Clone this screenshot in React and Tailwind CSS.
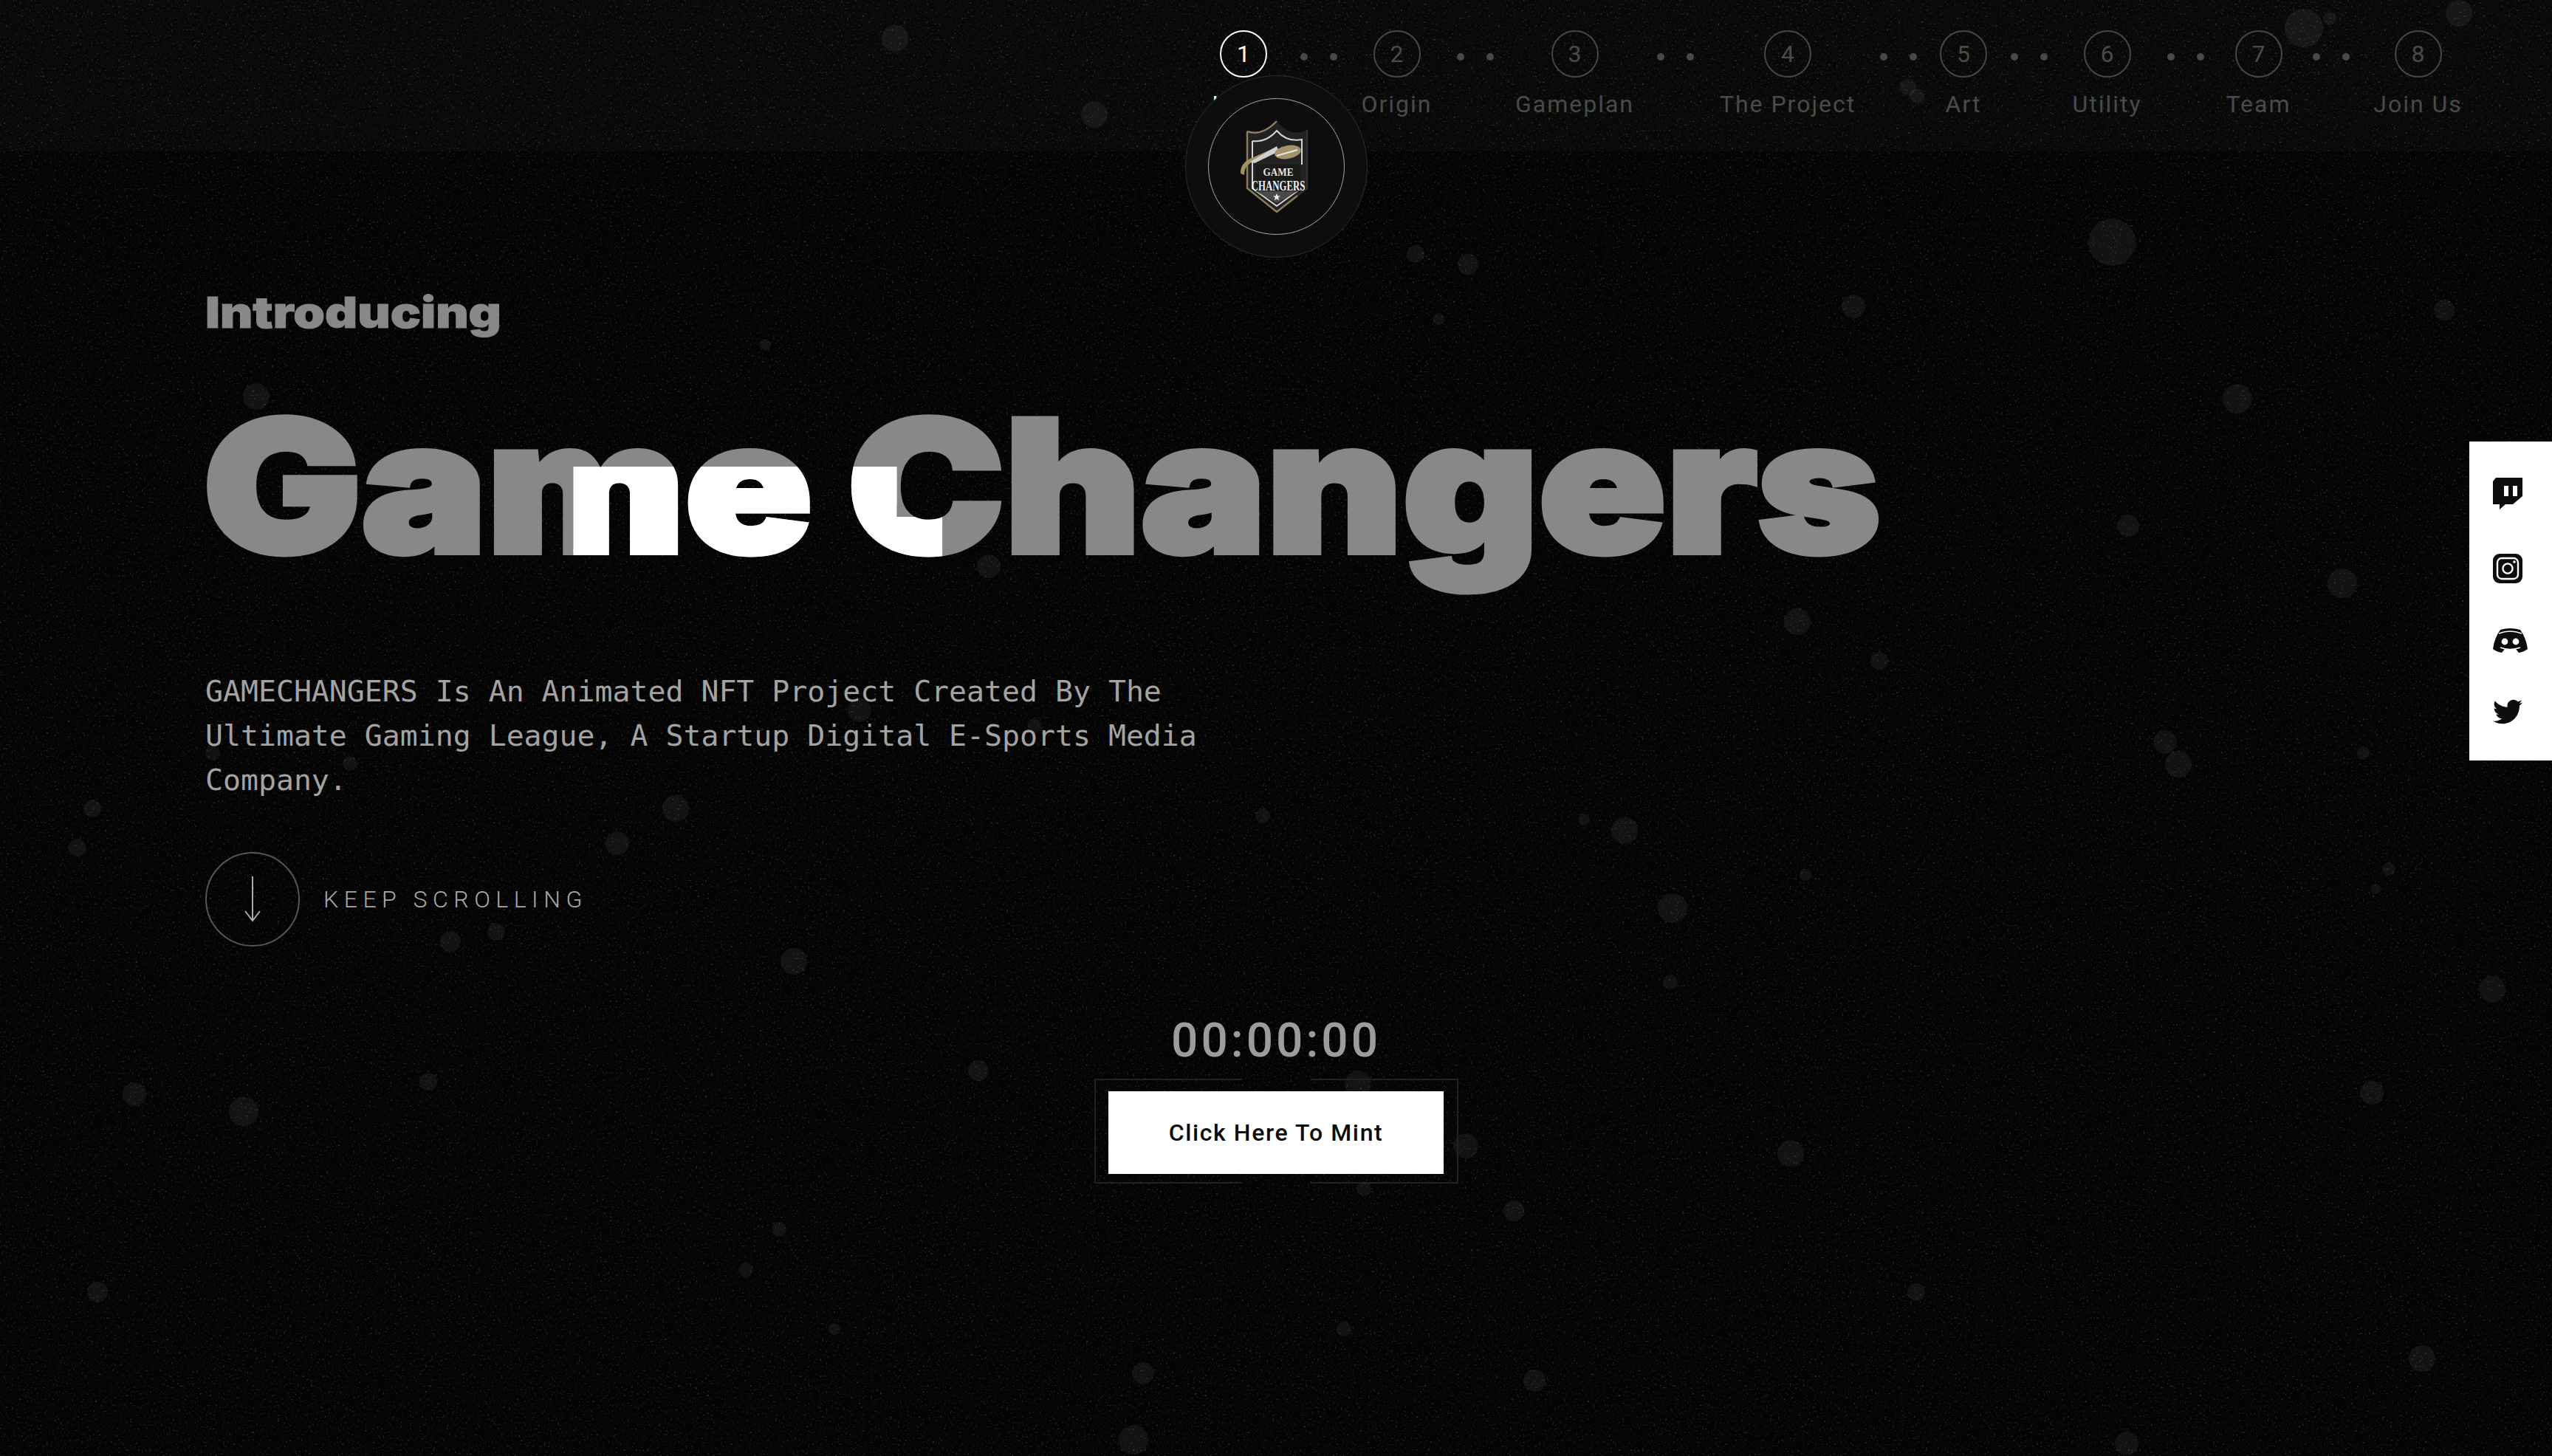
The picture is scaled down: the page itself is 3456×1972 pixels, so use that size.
import { FaTwitter } from "react-icons/fa";

const navItems = [
  { n: 1, label: "Intro", width: "w-[90px]", gap: "w-[113px]", active: true },
  { n: 2, label: "Origin", width: "w-[99px]", gap: "w-[112px]" },
  { n: 3, label: "Gameplan", width: "w-[159px]", gap: "w-[116px]" },
  { n: 4, label: "The Project", width: "w-[186px]", gap: "w-[113px]" },
  { n: 5, label: "Art", width: "w-[64px]", gap: "w-[113px]" },
  { n: 6, label: "Utility", width: "w-[99px]", gap: "w-[114px]" },
  { n: 7, label: "Team", width: "w-[83px]", gap: "w-[114px]" },
  { n: 8, label: "Join Us", width: "w-[121px]" },
];

// [cx, cy, r] of the soft round specks floating over the page
const bokeh = [
  [1212, 52, 18], [1482, 155, 18], [3120, 38, 26], [3330, 18, 18], [3155, 25, 9], [2584, 118, 11], [2596, 130, 10],
  [1917, 344, 12], [1988, 358, 14], [1948, 432, 8], [2860, 328, 32], [3310, 420, 14], [2510, 415, 16],
  [3030, 540, 20], [2882, 712, 15], [3172, 790, 20], [2434, 842, 18], [2545, 895, 12], [2932, 1005, 16],
  [3200, 1020, 9], [2950, 1035, 18], [2200, 1125, 18], [2265, 1230, 20], [3375, 1340, 18], [3212, 1480, 16],
  [2425, 1562, 18], [3280, 1840, 18], [2595, 1750, 12], [2880, 1955, 16], [2078, 1870, 15], [1548, 1860, 15],
  [1535, 1950, 20], [1130, 1800, 8], [132, 1750, 14], [330, 1505, 20], [182, 1482, 16], [580, 1465, 12],
  [125, 1095, 12], [105, 1148, 12], [915, 1095, 18], [836, 1142, 16], [672, 1262, 12], [610, 1275, 14],
  [1075, 1302, 18], [1325, 1450, 14], [1820, 1800, 10], [2050, 1640, 14], [1055, 1665, 10], [1010, 1720, 10],
  [2262, 1330, 10], [1839, 1468, 18], [1847, 1610, 10], [1985, 1552, 17], [2445, 1185, 8], [3235, 1177, 9], [3217, 1204, 7],
  [2145, 1110, 8], [2280, 630, 10], [1710, 1105, 10], [1401, 983, 10], [1164, 962, 16], [288, 1020, 10], [474, 1034, 10],
  [347, 537, 18], [1339, 767, 16], [1036, 467, 8],
];

function Grain() {
  return (
    <svg className="absolute inset-0 h-full w-full" aria-hidden="true">
      <filter id="grain" x="0" y="0" width="100%" height="100%" colorInterpolationFilters="sRGB">
        <feTurbulence type="fractalNoise" baseFrequency="0.38" numOctaves="2" seed="7" />
        <feColorMatrix values="0 0 0 0 1  0 0 0 0 1  0 0 0 0 1  5 0 0 0 -3.1" />
      </filter>
      <rect width="100%" height="100%" filter="url(#grain)" opacity="0.16" />
      {bokeh.map(([cx, cy, r]) => (
        <circle key={`${cx}-${cy}`} cx={cx} cy={cy} r={r} fill="#fff" opacity="0.06" />
      ))}
    </svg>
  );
}

function Dots({ width }) {
  return (
    <div className={`flex shrink-0 items-start gap-[30px] pl-[32px] pt-[31px] ${width}`}>
      <span className="h-[10px] w-[10px] rounded-full bg-[#484848]" />
      <span className="h-[10px] w-[10px] rounded-full bg-[#484848]" />
    </div>
  );
}

function Nav() {
  return (
    <header className="relative flex h-[205px] items-start justify-end bg-white/[0.025] pr-[121px] pt-[41px]">
      {navItems.map((item) => (
        <div key={item.n} className="flex shrink-0">
          <div className={`flex flex-col items-center ${item.width}`}>
            <div
              className={`flex h-[64px] w-[64px] items-center justify-center rounded-full border-2 text-[32px] leading-none ${
                item.active ? "border-white text-white" : "border-[#474747] text-[#4a4a4a]"
              }`}
            >
              {item.n}
            </div>
            <span className={`mt-[14px] whitespace-nowrap text-[32px] leading-[44px] ${item.active ? "tracking-[4px] text-white" : "tracking-[2px] text-[#4a4a4a]"}`}>
              {item.label}
            </span>
          </div>
          {item.gap && <Dots width={item.gap} />}
        </div>
      ))}
    </header>
  );
}

function Logo() {
  return (
    <div className="absolute left-[1605px] top-[102px] z-10 flex h-[247px] w-[247px] items-center justify-center rounded-full border border-[#2e2e2e] bg-[#0d0d0d]">
      <div className="flex h-[185px] w-[185px] items-center justify-center rounded-full border border-[#a8a8a8]">
        <svg width="100" height="126" viewBox="0 0 100 126" aria-hidden="true">
          {/* shield */}
          <path d="M10 15 Q30 22 50 1 Q68 24 91 13 L91 92 L50 124 L10 92 Z" fill="#222" />
          <path d="M91 13 L91 92 L50 124" fill="none" stroke="#333" strokeWidth="2.5" />
          <path d="M10 15 Q30 22 50 1 M10 15 L10 92 L50 124 L78 102" fill="none" stroke="#8d7f5a" strokeWidth="2.4" />
          <path d="M17 28 Q36 30 50 14 Q64 30 84 26 L84 60 M17 28 L17 92 L50 116 L83 92" fill="none" stroke="#d5d5d5" strokeWidth="2" />
          <path d="M22 96 H78 L50 112 Z" fill="#4a4a4a" />
          {/* ball with its trail */}
          <path d="M1 72 Q0 58 16 51 L50 36 Q26 52 14 58 Q6 63 6 74 Z" fill="#a1925f" />
          <path d="M14 56 L50 35 L53 42 L20 58 Z" fill="#cfcfcf" />
          <ellipse cx="65" cy="43" rx="18" ry="9" fill="#a3926a" transform="rotate(-10 65 43)" />
          <path d="M50 48 L78 40" stroke="#e8e8e8" strokeWidth="2" />
          <rect x="22" y="60" width="60" height="36" fill="#1a1a1a" />
          <text transform="translate(52 75) scale(1.2 1.25)" textAnchor="middle" fill="#e6e6e6" fontFamily="Liberation Serif, serif" fontWeight="700" fontSize="11">GAME</text>
          <text transform="translate(52 95) scale(0.95 1.4)" textAnchor="middle" fill="#f0f0f0" fontFamily="Liberation Serif, serif" fontWeight="700" fontSize="13.5">CHANGERS</text>
          <path d="M50 99 l1.5 3.5 h3.5 l-3 2.2 1.2 3.8 -3.2 -2.3 -3.2 2.3 1.2 -3.8 -3 -2.2 h3.5 Z" fill="#eee" />
        </svg>
      </div>
    </div>
  );
}

function Hero() {
  return (
    <section className="flex flex-col items-start pl-[278px] pt-[183px]">
      <p className="origin-left scale-x-[1.18] text-[58px] font-black leading-[70px] text-[#888] [-webkit-text-stroke:1px_#888] [font-family:Inter,sans-serif]">
        Introducing
      </p>
      <div className="relative -ml-[3px] mt-[45px] origin-left scale-x-[1.147] [word-spacing:-8px]">
        <h1 className="whitespace-nowrap text-[248px] font-black leading-[310px] text-[#888] [-webkit-text-stroke:8px_#888] [font-family:Inter,sans-serif]">
          Game Changers
        </h1>
        <div
          aria-hidden="true"
          className="absolute inset-0 whitespace-nowrap text-[248px] font-black leading-[310px] text-white [-webkit-text-stroke:8px_#fff] [font-family:Inter,sans-serif] [clip-path:polygon(437px_129px,819px_129px,819px_197px,873px_197px,873px_310px,437px_310px)]"
        >
          Game Changers
        </div>
      </div>
      <p className="mt-[93px] w-[1400px] text-[39.85px] leading-[60px] text-[#a3a3a3] [font-family:'DejaVu_Sans_Mono',monospace]">
        GAMECHANGERS Is An Animated NFT Project Created By The Ultimate Gaming League, A Startup Digital E-Sports Media Company.
      </p>
      <div className="mt-[68px] flex items-center gap-[32px]">
        <div className="flex h-[128px] w-[128px] items-center justify-center rounded-full border-2 border-[#555]">
          <svg width="30" height="62" viewBox="0 0 30 62" fill="none" stroke="#aaa" strokeWidth="2" aria-hidden="true">
            <path d="M15 0 V60 M5 47 L15 60 L25 47" />
          </svg>
        </div>
        <span className="text-[32px] font-light tracking-[7.5px] text-[#a8a8a8]">KEEP SCROLLING</span>
      </div>
    </section>
  );
}

function Mint() {
  return (
    <section className="mt-[88px] flex flex-col items-center">
      <p className="text-[64px] font-medium leading-[80px] tracking-[4px] text-[#9c9c9c]">00:00:00</p>
      <div className="relative mt-[11px] flex h-[142px] w-[493px] items-center justify-center pt-[4px]">
        <span className="absolute inset-y-0 left-0 w-[200px] border-y-2 border-l-2 border-[#222]" />
        <span className="absolute inset-y-0 right-0 w-[200px] border-y-2 border-r-2 border-[#222]" />
        <button className="relative h-[112px] w-[454px] bg-white text-[32px] font-medium tracking-[1.6px] text-[#0c0c0c]">Click Here To Mint</button>
      </div>
    </section>
  );
}

function Socials() {
  return (
    <aside className="absolute right-0 top-[598px] z-10 flex h-[432px] w-[112px] flex-col items-start bg-white pl-[32px] pt-[49px] text-[#0c0c0c]">
      <svg width="40" height="43" viewBox="0 0 40 43" aria-label="Twitch">
        <path d="M4 0 H40 V25 L27 36 H17 L9 43 V36 H0 V5 Z M15 11 V25 H21 V11 Z M27 11 V25 H33 V11 Z" fill="currentColor" fillRule="evenodd" />
      </svg>
      <svg className="mt-[60px]" width="40" height="40" viewBox="0 0 40 40" aria-label="Instagram">
        <rect width="40" height="40" rx="9" fill="currentColor" />
        <rect x="6" y="6" width="28" height="28" rx="6" fill="none" stroke="#fff" strokeWidth="2.4" />
        <circle cx="20" cy="20" r="6.6" fill="none" stroke="#fff" strokeWidth="2.4" />
        <circle cx="29" cy="11" r="1.8" fill="#fff" />
      </svg>
      <svg className="mt-[60px]" width="47" height="35" viewBox="0 0 47 35" aria-label="Discord">
        <path d="M10 3 Q23 -1 37 3 Q45 14 47 29 Q42 33 35 34 L31 29 Q23 31 16 29 L12 34 Q5 33 0 29 Q2 14 10 3 Z" fill="currentColor" />
        <path d="M8 8 Q23 2 39 8 M10 27 Q23 32 37 27" fill="none" stroke="#fff" strokeWidth="1.4" />
        <circle cx="16" cy="19" r="4.4" fill="#fff" />
        <circle cx="31" cy="19" r="4.4" fill="#fff" />
      </svg>
      <FaTwitter size={40} className="mt-[59px]" aria-label="Twitter" />
    </aside>
  );
}

export default function App() {
  return (
    <main className="relative h-[1972px] overflow-hidden bg-[#040404] [font-family:Roboto,sans-serif]">
      <Grain />
      <div className="relative">
        <Nav />
        <Logo />
        <Hero />
        <Mint />
      </div>
      <Socials />
    </main>
  );
}
